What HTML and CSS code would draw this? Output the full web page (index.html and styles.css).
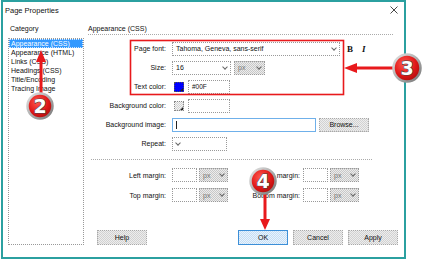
FILE: index.html
```html
<!doctype html>
<html>
<head>
    <meta charset="utf-8">
    <title>Page Properties</title>
    <link rel="stylesheet" href="styles.css">
</head>
<body>
<div class="dialog">
    <div class="titlebar">
        <span class="title">Page Properties</span>
        <svg class="close" width="8" height="8" viewBox="0 0 8 8">
            <path d="M0.5 0.5L7.5 7.5M7.5 0.5L0.5 7.5" stroke="#333" stroke-width="0.9"/>
        </svg>
    </div>

    <div class="content">
        <div class="category">
            <div class="cat-title">Category</div>
            <ul class="cat-list">
                <li class="selected">Appearance (CSS)</li>
                <li>Appearance (HTML)</li>
                <li>Links (CSS)</li>
                <li>Headings (CSS)</li>
                <li>Title/Encoding</li>
                <li>Tracing Image</li>
            </ul>
        </div>

        <div class="panel">
            <div class="panel-title">Appearance (CSS)</div>

            <div class="rows">
                <div class="row">
                    <span class="label">Page font:</span>
                    <div class="field select font-select">Tahoma, Geneva, sans-serif<i class="chev"></i></div>
                    <span class="style-btn bold">B</span>
                    <span class="style-btn italic">I</span>
                </div>
                <div class="row">
                    <span class="label">Size:</span>
                    <div class="field select size-select">16<i class="chev"></i></div>
                    <div class="field select unit disabled">px<i class="chev"></i></div>
                </div>
                <div class="row">
                    <span class="label">Text color:</span>
                    <span class="swatch blue"></span>
                    <div class="field color-field">#00F</div>
                </div>
                <div class="row">
                    <span class="label">Background color:</span>
                    <span class="swatch"></span>
                    <div class="field color-field"></div>
                </div>
                <div class="row">
                    <span class="label">Background image:</span>
                    <div class="field image-field"><i class="caret"></i></div>
                    <div class="button browse">Browse...</div>
                </div>
                <div class="row">
                    <span class="label">Repeat:</span>
                    <div class="field select repeat-select"><i class="chev"></i></div>
                </div>
            </div>

            <hr class="sep">

            <div class="margins">
                <div class="mrow">
                    <span class="label">Left margin:</span>
                    <div class="field num"></div>
                    <div class="field select unit-sm disabled">px<i class="chev"></i></div>
                    <span class="label label-r">Right margin:</span>
                    <div class="field num"></div>
                    <div class="field select unit-sm disabled">px<i class="chev"></i></div>
                </div>
                <div class="mrow">
                    <span class="label">Top margin:</span>
                    <div class="field num"></div>
                    <div class="field select unit-sm disabled">px<i class="chev"></i></div>
                    <span class="label label-r">Bottom margin:</span>
                    <div class="field num"></div>
                    <div class="field select unit-sm disabled">px<i class="chev"></i></div>
                </div>
            </div>

            <div class="buttons">
                <div class="button help">Help</div>
                <div class="button ok">OK</div>
                <div class="button">Cancel</div>
                <div class="button">Apply</div>
            </div>
        </div>
    </div>
</div>

<!-- annotation layer -->
<svg class="notes" width="423" height="259" viewBox="0 0 423 259">
    <defs>
        <radialGradient id="redball" cx="40%" cy="35%" r="70%">
            <stop offset="0" stop-color="#ff5a50"/>
            <stop offset="0.6" stop-color="#e01818"/>
            <stop offset="1" stop-color="#a80c0c"/>
        </radialGradient>
        <linearGradient id="ring" x1="0" y1="0" x2="1" y2="1">
            <stop offset="0" stop-color="#e4e4e4"/>
            <stop offset="1" stop-color="#777"/>
        </linearGradient>
    </defs>

    <rect x="130.5" y="40.5" width="213" height="54" fill="none" stroke="#e8191c" stroke-width="1.6"/>

    <line x1="41" y1="94" x2="41" y2="60" stroke="#e8191c" stroke-width="3"/>
    <polygon points="41,50 36,62 46,62" fill="#e8191c"/>

    <line x1="394" y1="68" x2="355" y2="68" stroke="#e8191c" stroke-width="3"/>
    <polygon points="344,68 357,63 357,73" fill="#e8191c"/>

    <line x1="265" y1="193" x2="265" y2="220" stroke="#e8191c" stroke-width="3"/>
    <polygon points="265,230 260,219 270,219" fill="#e8191c"/>

    <circle cx="40" cy="106" r="12.5" fill="url(#redball)" stroke="url(#ring)" stroke-width="2.5"/>
    <text class="badge-num" x="40" y="113">2</text>

    <circle cx="407" cy="68" r="13.5" fill="url(#redball)" stroke="url(#ring)" stroke-width="2.5"/>
    <text class="badge-num" x="407" y="75">3</text>

    <circle cx="263" cy="181" r="12.5" fill="url(#redball)" stroke="url(#ring)" stroke-width="2.5"/>
    <text class="badge-num" x="263" y="188">4</text>
</svg>
</body>
</html>
```

FILE: styles.css
```css
* {
    box-sizing: border-box;
}

body {
    margin: 0;
    width: 423px;
    height: 259px;
    position: relative;
    overflow: hidden;
    background: #FFFFFF;
    font-family: "Liberation Sans", Arial, sans-serif;
    font-size: 7px;
    color: #111;
}

.dialog {
    margin-left: 1px;
    width: 405px;
    height: 259px;
    border: 2px solid #2ba0a0;
    display: flex;
    flex-direction: column;
}

.titlebar {
    height: 16px;
    display: flex;
    align-items: center;
    justify-content: space-between;
    padding: 0 6px 0 2px;
    font-size: 7.5px;
}

.content {
    display: flex;
    gap: 4px;
    padding-left: 5px;
}

/* category list */
.category {
    width: 76px;
}

.cat-title,
.panel-title {
    margin-top: 6px;
    height: 11px;
    line-height: 10px;
    padding-left: 2px;
}

.cat-list {
    margin: 3px 0 0;
    padding: 0;
    list-style: none;
    height: 207px;
    border: 1px dotted #999;
}

.cat-list li {
    height: 9px;
    line-height: 9px;
    padding-left: 2px;
    white-space: nowrap;
}

.cat-list li.selected {
    background: #3399ff;
    color: #FFFFFF;
    outline: 1px dotted #cfe6ff;
    outline-offset: -1px;
}

/* main panel */
.panel {
    width: 311px;
}

.panel-title {
    margin-right: 6px;
    padding-left: 0;
    border-bottom: 1px dotted #aaa;
}

.rows {
    margin-top: 4px;
}

.row {
    display: flex;
    align-items: center;
    height: 19px;
}

.label {
    width: 78px;
    margin-right: 6px;
    text-align: right;
    white-space: nowrap;
}

.field {
    height: 14px;
    border: 1px dotted #999;
    background: #FFFFFF;
    padding-left: 3px;
    display: flex;
    align-items: center;
    white-space: nowrap;
}

.select {
    justify-content: space-between;
    padding-right: 3px;
}

.chev {
    width: 4px;
    height: 4px;
    border-right: 1px solid #666;
    border-bottom: 1px solid #666;
    transform: translateY(-1px) rotate(45deg);
}

.disabled {
    background: repeating-conic-gradient(#c8c8c8 0 25%, #ececec 0 50%) 0 0 / 2px 2px;
    color: #777;
}

.font-select {
    width: 168px;
}

.style-btn {
    font-family: "Liberation Serif", serif;
    font-weight: bold;
    font-size: 9px;
    color: #111;
}

.bold {
    margin-left: 7px;
}

.italic {
    margin-left: 9px;
    font-style: italic;
}

.size-select {
    width: 59px;
}

.unit {
    width: 31px;
    margin-left: 3px;
}

.swatch {
    position: relative;
    width: 10px;
    height: 10px;
    margin: 0 4px 0 2px;
    border: 1px dotted #888;
    background: repeating-conic-gradient(#d0d0d0 0 25%, #f4f4f4 0 50%) 0 0 / 2px 2px;
}

.swatch.blue {
    background: #0000ff;
    border-color: #555;
}

.swatch::after {
    content: "";
    position: absolute;
    right: 0;
    bottom: 0;
    border-left: 3px solid transparent;
    border-bottom: 3px solid #222;
}

.color-field {
    width: 42px;
    font-size: 6.5px;
}

.image-field {
    width: 144px;
    border: 1px solid #6fb0ea;
}

.caret {
    width: 1px;
    height: 8px;
    background: #222;
}

.repeat-select {
    width: 55px;
}

.sep {
    margin: 6px 27px 0 3px;
    border: 0;
    border-top: 1px dotted #aaa;
}

.margins {
    margin-top: 5px;
}

.mrow {
    display: flex;
    align-items: center;
    height: 20px;
}

.num {
    width: 25px;
}

.unit-sm {
    width: 29px;
    margin-left: 2px;
}

.label-r {
    width: 72px;
    margin-right: 3px;
}

/* buttons */
.button {
    height: 15px;
    width: 50px;
    border: 1px dotted #a8a8a8;
    background: repeating-conic-gradient(#d2d2d2 0 25%, #ededed 0 50%) 0 0 / 2px 2px;
    display: flex;
    align-items: center;
    justify-content: center;
}

.browse {
    height: 14px;
    margin-left: 3px;
}

.buttons {
    display: flex;
    gap: 5px;
    margin-top: 25px;
}

.help {
    margin-left: 9px;
}

.ok {
    margin-left: 86px;
    border: 1px solid #3c8fd8;
    background: repeating-conic-gradient(#c4def5 0 25%, #eaf3fc 0 50%) 0 0 / 2px 2px;
}

/* annotations */
.notes {
    position: absolute;
    left: 0;
    top: 0;
    pointer-events: none;
}

.badge-num {
    font-family: "DejaVu Sans", sans-serif;
    font-weight: bold;
    font-size: 19px;
    fill: #FFFFFF;
    stroke: #444;
    stroke-width: 1.2px;
    paint-order: stroke;
    text-anchor: middle;
}
```
